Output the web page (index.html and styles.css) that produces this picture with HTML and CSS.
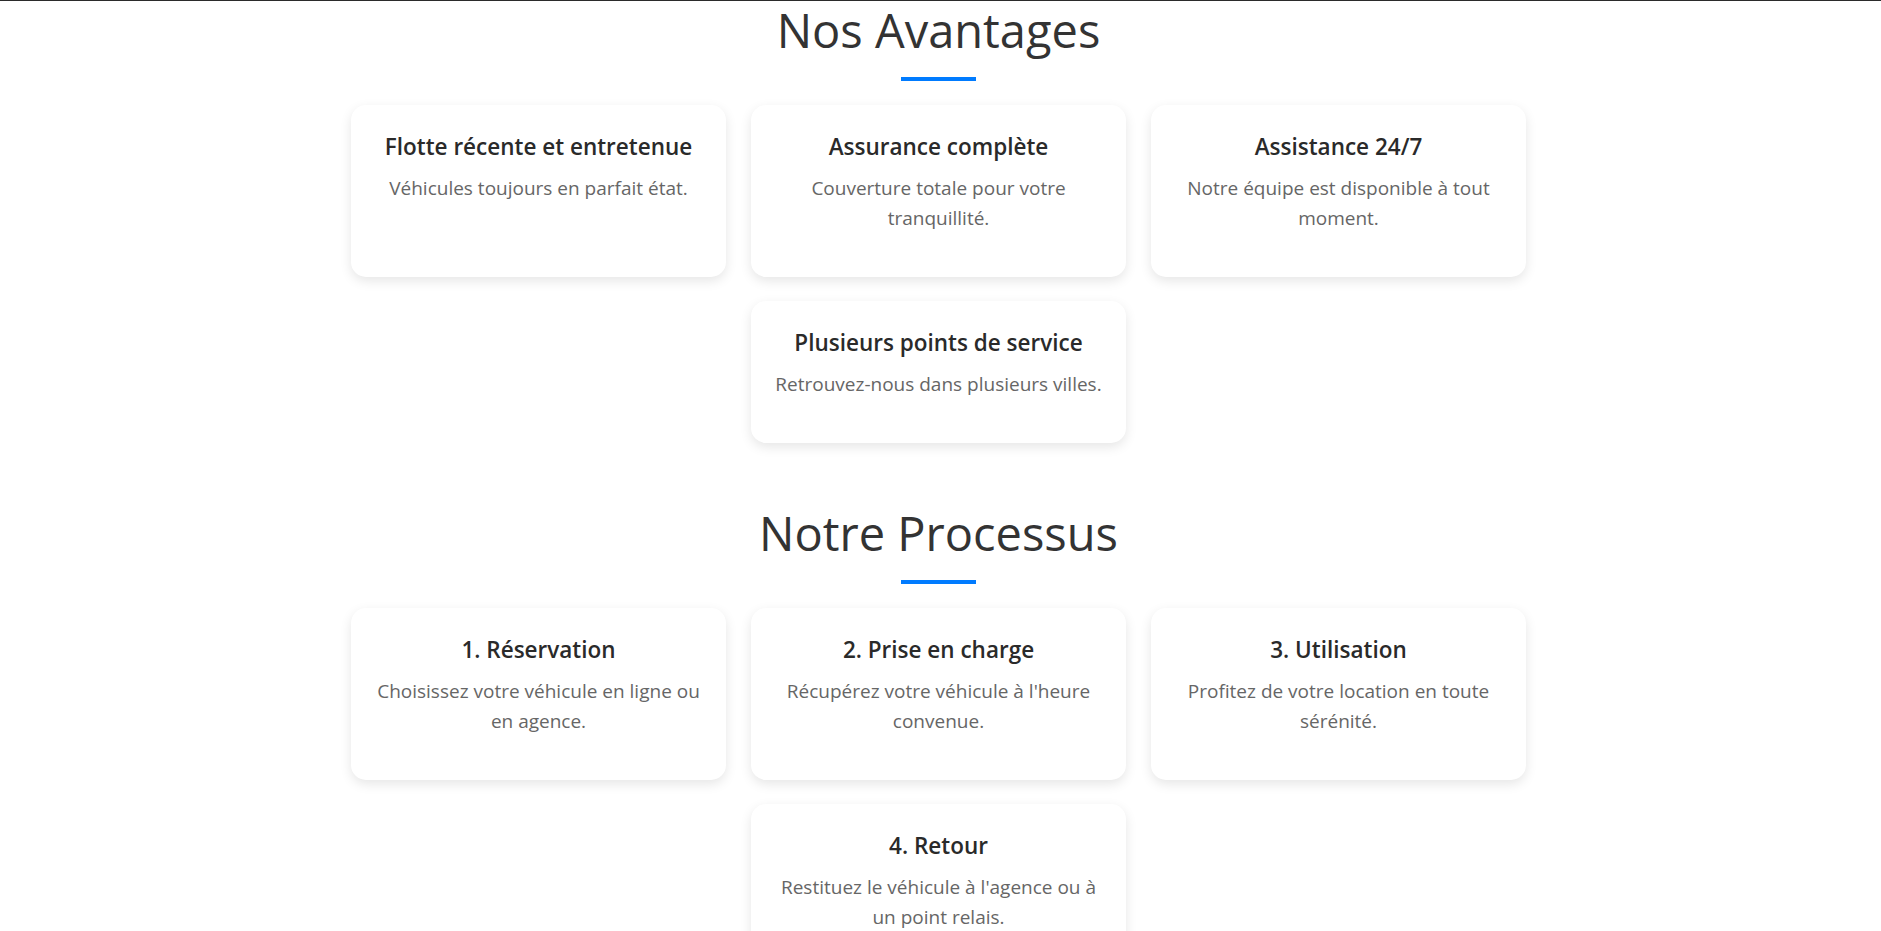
FILE: index.html
```html
<!DOCTYPE html>
<html lang="fr">
<head>
<meta charset="utf-8">
<title>Nos Avantages</title>
<link rel="stylesheet" href="styles.css">
</head>
<body>
<div class="topline"></div>
<main class="page">
  <section class="section">
    <h2 class="section-title">Nos Avantages</h2>
    <div class="title-bar"></div>
    <div class="cards">
      <div class="card">
        <h3 class="card-title">Flotte récente et entretenue</h3>
        <p class="card-text">Véhicules toujours en parfait état.</p>
      </div>
      <div class="card">
        <h3 class="card-title">Assurance complète</h3>
        <p class="card-text">Couverture totale pour votre tranquillité.</p>
      </div>
      <div class="card">
        <h3 class="card-title">Assistance 24/7</h3>
        <p class="card-text">Notre équipe est disponible à tout moment.</p>
      </div>
      <div class="card">
        <h3 class="card-title">Plusieurs points de service</h3>
        <p class="card-text">Retrouvez-nous dans plusieurs villes.</p>
      </div>
    </div>
  </section>
  <section class="section">
    <h2 class="section-title">Notre Processus</h2>
    <div class="title-bar"></div>
    <div class="cards">
      <div class="card">
        <h3 class="card-title">1. Réservation</h3>
        <p class="card-text">Choisissez votre véhicule en ligne ou en agence.</p>
      </div>
      <div class="card">
        <h3 class="card-title">2. Prise en charge</h3>
        <p class="card-text">Récupérez votre véhicule à l'heure convenue.</p>
      </div>
      <div class="card">
        <h3 class="card-title">3. Utilisation</h3>
        <p class="card-text">Profitez de votre location en toute sérénité.</p>
      </div>
      <div class="card">
        <h3 class="card-title">4. Retour</h3>
        <p class="card-text">Restituez le véhicule à l'agence ou à un point relais.</p>
      </div>
    </div>
  </section>
</main>
</body>
</html>
```

FILE: styles.css
```css
* {
  box-sizing: border-box;
}

html, body {
  margin: 0;
  padding: 0;
  background: #ffffff;
}

body {
  font-family: "Open Sans", "Noto Sans", sans-serif;
  color: #333333;
}

.topline {
  height: 1px;
  background: #2b2b2b;
}

.page {
  padding-right: 4px;
}

.section {
  display: flex;
  flex-direction: column;
  align-items: center;
  padding-bottom: 61px;
}

.section-title {
  margin: 0;
  font-size: 47px;
  font-weight: 400;
  line-height: 58px;
  color: #333333;
  text-align: center;
}

.title-bar {
  width: 75px;
  height: 4px;
  margin-top: 18px;
  background: #007bff;
}

.cards {
  width: 1175px;
  margin-top: 24px;
  display: flex;
  flex-wrap: wrap;
  justify-content: center;
  gap: 24px 25px;
}

.card {
  width: 375px;
  padding: 28px 20px;
  background: #ffffff;
  border-radius: 15px;
  box-shadow: 0 4px 12px rgba(0, 0, 0, 0.1);
  text-align: center;
}

.card-title {
  margin: 0 0 13px;
  font-size: 22.5px;
  font-weight: 600;
  line-height: 27px;
  color: #2a2a2a;
}

.card-text {
  margin: 0 0 16px;
  font-size: 19px;
  line-height: 30px;
  color: #666666;
}
```
